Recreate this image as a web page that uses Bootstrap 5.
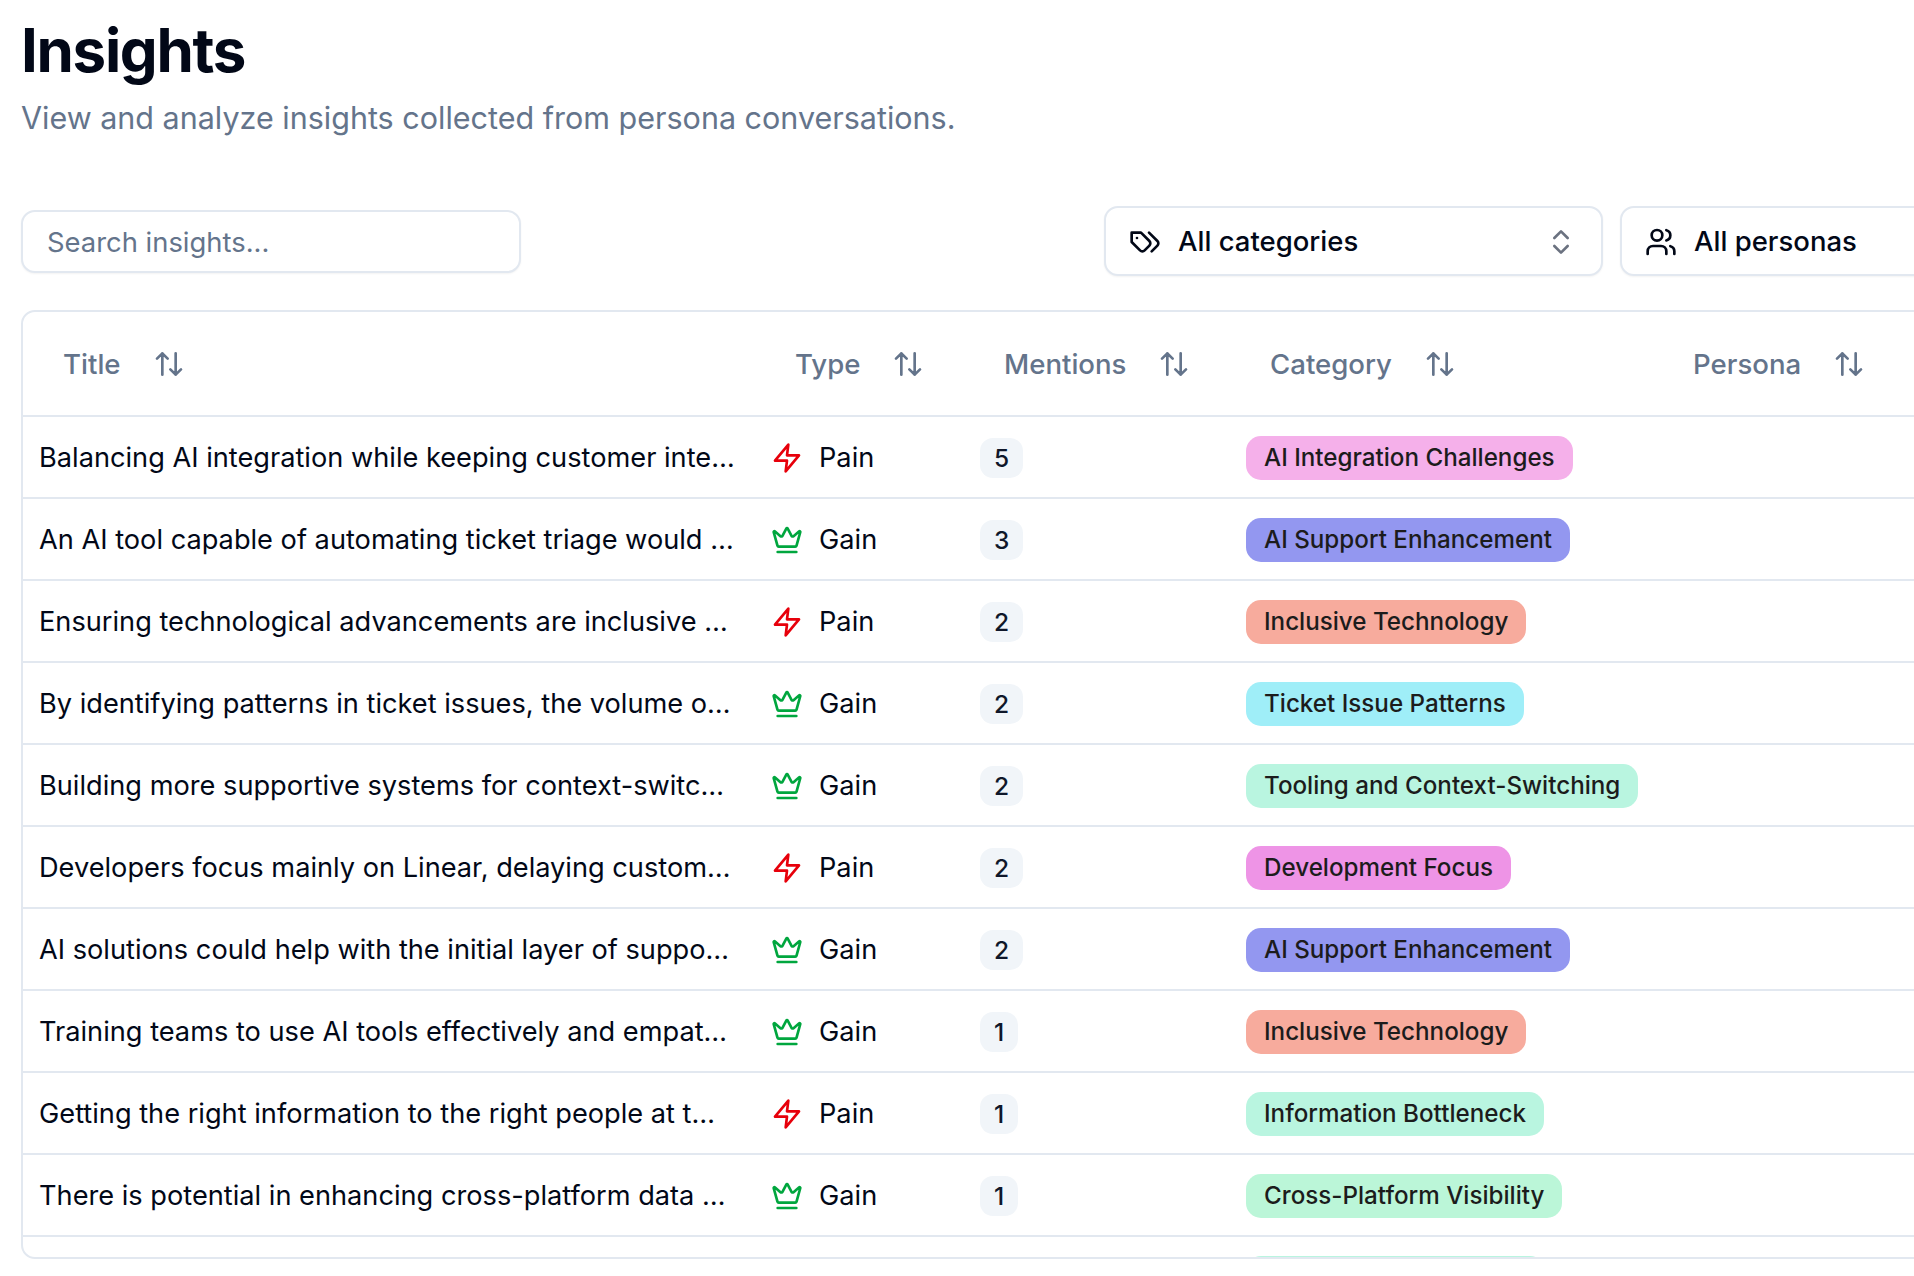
<!doctype html>
<html lang="en">
<head>
<meta charset="utf-8">
<title>Insights</title>
<link href="https://cdn.jsdelivr.net/npm/bootstrap@5.3.0/dist/css/bootstrap.min.css" rel="stylesheet">
<style>
html,body{height:100%;overflow:hidden;background:#fff}
body{font-family:Inter,"Liberation Sans",sans-serif;color:#020817}
.page-wrap{width:2098px;margin-left:21px;padding-top:20px}
.page-title{font-size:60px;font-weight:700;line-height:60px;letter-spacing:-1.3px;margin:0;color:#020817}
.page-sub{font-size:30.5px;line-height:42px;color:#64748b;margin:17px 0 0}
.tool-row{margin-top:67px;height:70px}
.search-box{width:500px;height:63px;border:2px solid #e2e8f0;border-radius:14px;font-size:27.4px;padding:2px 24px 0;color:#020817;box-shadow:0 1px 2px rgba(0,0,0,.05)}
.search-box::placeholder{color:#64748b;opacity:1}
.pick-gap{gap:17px}
.pick-box{width:499px;height:70px;border:2px solid #e2e8f0;border-radius:14px;background:#fff;font-size:27.5px;font-weight:500;padding:2px 24px 0 23px;gap:17px;box-shadow:0 1px 2px rgba(0,0,0,.05);color:#020817}
.pick-lead{width:32px;height:32px;flex:none}
.pick-arrow{width:32px;height:32px;margin-left:auto;color:#6b7280;flex:none}
.table-shell{margin-top:34px;height:949px;border:2px solid #e2e8f0;border-radius:14px;overflow:hidden}
.data-table{table-layout:fixed;width:100%;margin:0;--bs-table-color:#020817}
.data-table th,.data-table td{border-bottom:2px solid #e2e8f0;padding:2px 16px 0;vertical-align:middle;white-space:nowrap}
.data-table th{height:104px;font-size:27.6px;font-weight:500;color:#64748b}
.data-table td{height:82px;font-size:27.2px;font-weight:400}
.head-cell{padding-left:24px;gap:32px}
.head-arrow{width:32px;height:32px;color:#64748b;flex:none}
.type-cell{gap:16px}
.type-icon{width:32px;height:32px;flex:none}
.type-pain{color:#e7000b}
.type-gain{color:#00a63e}
.count-chip{display:inline-flex;align-items:center;justify-content:center;height:40px;padding:0 14px;border-radius:13px;background:#f1f5f9;font-size:24.5px;font-weight:500;color:#0f172a}
.cat-chip{display:inline-flex;align-items:center;height:44px;padding:0 18px;border-radius:15px;font-size:24.2px;font-weight:500;color:#1c1c1c}
.cat-chip-empty{min-width:299px}
.c-pink{background:#f5b0ea}.c-indigo{background:#9397f0}.c-salmon{background:#f7ab9d}.c-cyan{background:#9feef8}.c-mint{background:#b9f5e0}.c-green{background:#bbf6d8}.c-fuchsia{background:#ee94e6}
</style>
</head>
<body>
<svg width="0" height="0" class="d-none">
<symbol id="i-sort" viewBox="0 0 24 24"><path d="m21 16-4 4-4-4M17 20V4M3 8l4-4 4 4M7 4v16" fill="none" stroke="currentColor" stroke-width="2" stroke-linecap="round" stroke-linejoin="round"/></symbol>
<symbol id="i-zap" viewBox="0 0 24 24"><path d="M13 2 3 14h9l-1 8 10-12h-9z" fill="none" stroke="currentColor" stroke-width="2" stroke-linecap="round" stroke-linejoin="round"/></symbol>
<symbol id="i-crown" viewBox="0 0 24 24"><path d="M11.562 3.266a.5.5 0 0 1 .876 0L15.39 8.87a1 1 0 0 0 1.516.294L21.183 5.5a.5.5 0 0 1 .798.519l-2.834 10.246a1 1 0 0 1-.956.734H5.81a1 1 0 0 1-.957-.734L2.02 6.02a.5.5 0 0 1 .798-.519l4.276 3.664a1 1 0 0 0 1.516-.294zM5 21h14" fill="none" stroke="currentColor" stroke-width="2" stroke-linecap="round" stroke-linejoin="round"/></symbol>
</svg>
<div class="page-wrap">
  <h1 class="page-title">Insights</h1>
  <p class="page-sub">View and analyze insights collected from persona conversations.</p>
  <div class="tool-row d-flex align-items-center justify-content-between">
    <input class="search-box" type="text" placeholder="Search insights...">
    <div class="d-flex pick-gap">
      <div class="pick-box d-flex align-items-center">
        <svg class="pick-lead" viewBox="0 0 24 24" fill="none" stroke="currentColor" stroke-width="2" stroke-linecap="round" stroke-linejoin="round"><path d="M9 5H2v7l6.29 6.29c.94.94 2.48.94 3.42 0l3.58-3.58c.94-.94.94-2.48 0-3.42L9 5ZM6 9.01V9M15 5l6.3 6.3a2.4 2.4 0 0 1 0 3.4L17 19"/></svg>
        <span>All categories</span>
        <svg class="pick-arrow" viewBox="0 0 24 24" fill="none" stroke="currentColor" stroke-width="2" stroke-linecap="round" stroke-linejoin="round"><path d="m7 15 5 5 5-5M7 9l5-5 5 5"/></svg>
      </div>
      <div class="pick-box d-flex align-items-center">
        <svg class="pick-lead" viewBox="0 0 24 24" fill="none" stroke="currentColor" stroke-width="2" stroke-linecap="round" stroke-linejoin="round"><path d="M16 21v-2a4 4 0 0 0-4-4H6a4 4 0 0 0-4 4v2M22 21v-2a4 4 0 0 0-3-3.87M16 3.13a4 4 0 0 1 0 7.75"/><circle cx="9" cy="7" r="4"/></svg>
        <span>All personas</span>
        <svg class="pick-arrow" viewBox="0 0 24 24" fill="none" stroke="currentColor" stroke-width="2" stroke-linecap="round" stroke-linejoin="round"><path d="m7 15 5 5 5-5M7 9l5-5 5 5"/></svg>
      </div>
    </div>
  </div>
  <div class="table-shell">
    <table class="table data-table">
      <colgroup><col style="width:732px"><col style="width:209px"><col style="width:266px"><col style="width:423px"><col></colgroup>
      <thead><tr>
        <th><div class="head-cell d-flex align-items-center">Title<svg class="head-arrow"><use href="#i-sort"/></svg></div></th>
        <th><div class="head-cell d-flex align-items-center">Type<svg class="head-arrow"><use href="#i-sort"/></svg></div></th>
        <th><div class="head-cell d-flex align-items-center">Mentions<svg class="head-arrow"><use href="#i-sort"/></svg></div></th>
        <th><div class="head-cell d-flex align-items-center">Category<svg class="head-arrow"><use href="#i-sort"/></svg></div></th>
        <th><div class="head-cell d-flex align-items-center">Persona<svg class="head-arrow"><use href="#i-sort"/></svg></div></th>
      </tr></thead>
      <tbody>
        <tr><td>Balancing AI integration while keeping customer inte…</td><td><div class="type-cell d-flex align-items-center"><svg class="type-icon type-pain"><use href="#i-zap"/></svg>Pain</div></td><td><span class="count-chip">5</span></td><td><span class="cat-chip c-pink">AI Integration Challenges</span></td><td></td></tr>
        <tr><td>An AI tool capable of automating ticket triage would …</td><td><div class="type-cell d-flex align-items-center"><svg class="type-icon type-gain"><use href="#i-crown"/></svg>Gain</div></td><td><span class="count-chip">3</span></td><td><span class="cat-chip c-indigo">AI Support Enhancement</span></td><td></td></tr>
        <tr><td>Ensuring technological advancements are inclusive …</td><td><div class="type-cell d-flex align-items-center"><svg class="type-icon type-pain"><use href="#i-zap"/></svg>Pain</div></td><td><span class="count-chip">2</span></td><td><span class="cat-chip c-salmon">Inclusive Technology</span></td><td></td></tr>
        <tr><td>By identifying patterns in ticket issues, the volume o…</td><td><div class="type-cell d-flex align-items-center"><svg class="type-icon type-gain"><use href="#i-crown"/></svg>Gain</div></td><td><span class="count-chip">2</span></td><td><span class="cat-chip c-cyan">Ticket Issue Patterns</span></td><td></td></tr>
        <tr><td>Building more supportive systems for context-switc…</td><td><div class="type-cell d-flex align-items-center"><svg class="type-icon type-gain"><use href="#i-crown"/></svg>Gain</div></td><td><span class="count-chip">2</span></td><td><span class="cat-chip c-mint">Tooling and Context-Switching</span></td><td></td></tr>
        <tr><td>Developers focus mainly on Linear, delaying custom…</td><td><div class="type-cell d-flex align-items-center"><svg class="type-icon type-pain"><use href="#i-zap"/></svg>Pain</div></td><td><span class="count-chip">2</span></td><td><span class="cat-chip c-fuchsia">Development Focus</span></td><td></td></tr>
        <tr><td>AI solutions could help with the initial layer of suppo…</td><td><div class="type-cell d-flex align-items-center"><svg class="type-icon type-gain"><use href="#i-crown"/></svg>Gain</div></td><td><span class="count-chip">2</span></td><td><span class="cat-chip c-indigo">AI Support Enhancement</span></td><td></td></tr>
        <tr><td>Training teams to use AI tools effectively and empat…</td><td><div class="type-cell d-flex align-items-center"><svg class="type-icon type-gain"><use href="#i-crown"/></svg>Gain</div></td><td><span class="count-chip">1</span></td><td><span class="cat-chip c-salmon">Inclusive Technology</span></td><td></td></tr>
        <tr><td>Getting the right information to the right people at t…</td><td><div class="type-cell d-flex align-items-center"><svg class="type-icon type-pain"><use href="#i-zap"/></svg>Pain</div></td><td><span class="count-chip">1</span></td><td><span class="cat-chip c-mint">Information Bottleneck</span></td><td></td></tr>
        <tr><td>There is potential in enhancing cross-platform data …</td><td><div class="type-cell d-flex align-items-center"><svg class="type-icon type-gain"><use href="#i-crown"/></svg>Gain</div></td><td><span class="count-chip">1</span></td><td><span class="cat-chip c-green">Cross-Platform Visibility</span></td><td></td></tr>
        <tr><td></td><td></td><td></td><td><span class="cat-chip cat-chip-empty c-mint">&nbsp;</span></td><td></td></tr>
      </tbody>
    </table>
  </div>
</div>
<script src="https://cdn.jsdelivr.net/npm/bootstrap@5.3.0/dist/js/bootstrap.bundle.min.js"></script>
</body>
</html>
